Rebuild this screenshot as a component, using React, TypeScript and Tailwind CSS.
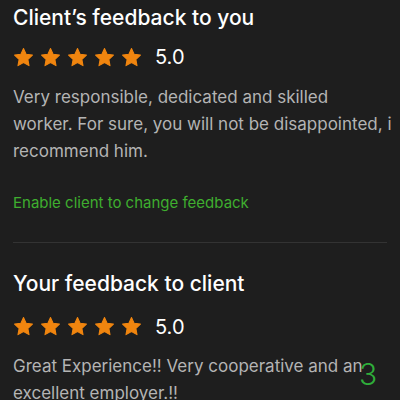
const Star = () => (
  <svg viewBox="0 0 24 24" className="w-[21px] h-[21px]" fill="#f0850f">
    <path d="M12 1.8l3.1 6.6 7.1.9-5.2 4.9 1.3 7.1L12 17.8l-6.3 3.5 1.3-7.1L1.8 9.3l7.1-.9z" strokeLinejoin="round" stroke="#f0850f" strokeWidth="1.2" />
  </svg>
);

function Rating({ value }: { value: string }) {
  return (
    <div className="flex items-center gap-[6px]">
      {[0, 1, 2, 3, 4].map((i) => (
        <Star key={i} />
      ))}
      <span className="ml-[7px] text-[20px] text-white">{value}</span>
    </div>
  );
}

export default function App() {
  return (
    <main
      className="relative w-[400px] h-[400px] overflow-hidden bg-[#1e1e1e] pl-[13px] pr-[8px] pt-[4px]"
      style={{ fontFamily: 'Inter, "Liberation Sans", sans-serif' }}
    >
      {/* Client's feedback */}
      <section>
        <h2 className="text-[21px] leading-[28px] font-medium text-white">Client’s feedback to you</h2>
        <div className="mt-[10px]">
          <Rating value="5.0" />
        </div>
        <p className="mt-[12px] text-[17px] leading-[27px] text-[#b4b4b4]">
          Very responsible, dedicated and skilled worker. For sure, you will not be disappointed, i recommend him.
        </p>
        <a href="#" className="block mt-[27px] text-[15px] text-[#3fae2f]">
          Enable client to change feedback
        </a>
      </section>

      <hr className="mt-[27px] mr-[5px] border-t border-[#333333]" />

      {/* Your feedback */}
      <section className="mt-[27px]">
        <h2 className="text-[21px] leading-[28px] font-medium text-white">Your feedback to client</h2>
        <div className="mt-[14px]">
          <Rating value="5.0" />
        </div>
        <p className="mt-[11px] text-[17px] leading-[27px] text-[#b4b4b4]">
          Great Experience!! Very cooperative and an excellent employer.!!
        </p>
      </section>

      <span className="absolute left-[359px] top-[356px] text-[30px] leading-[36px] font-light text-[#2fae3a]">3</span>
    </main>
  );
}
